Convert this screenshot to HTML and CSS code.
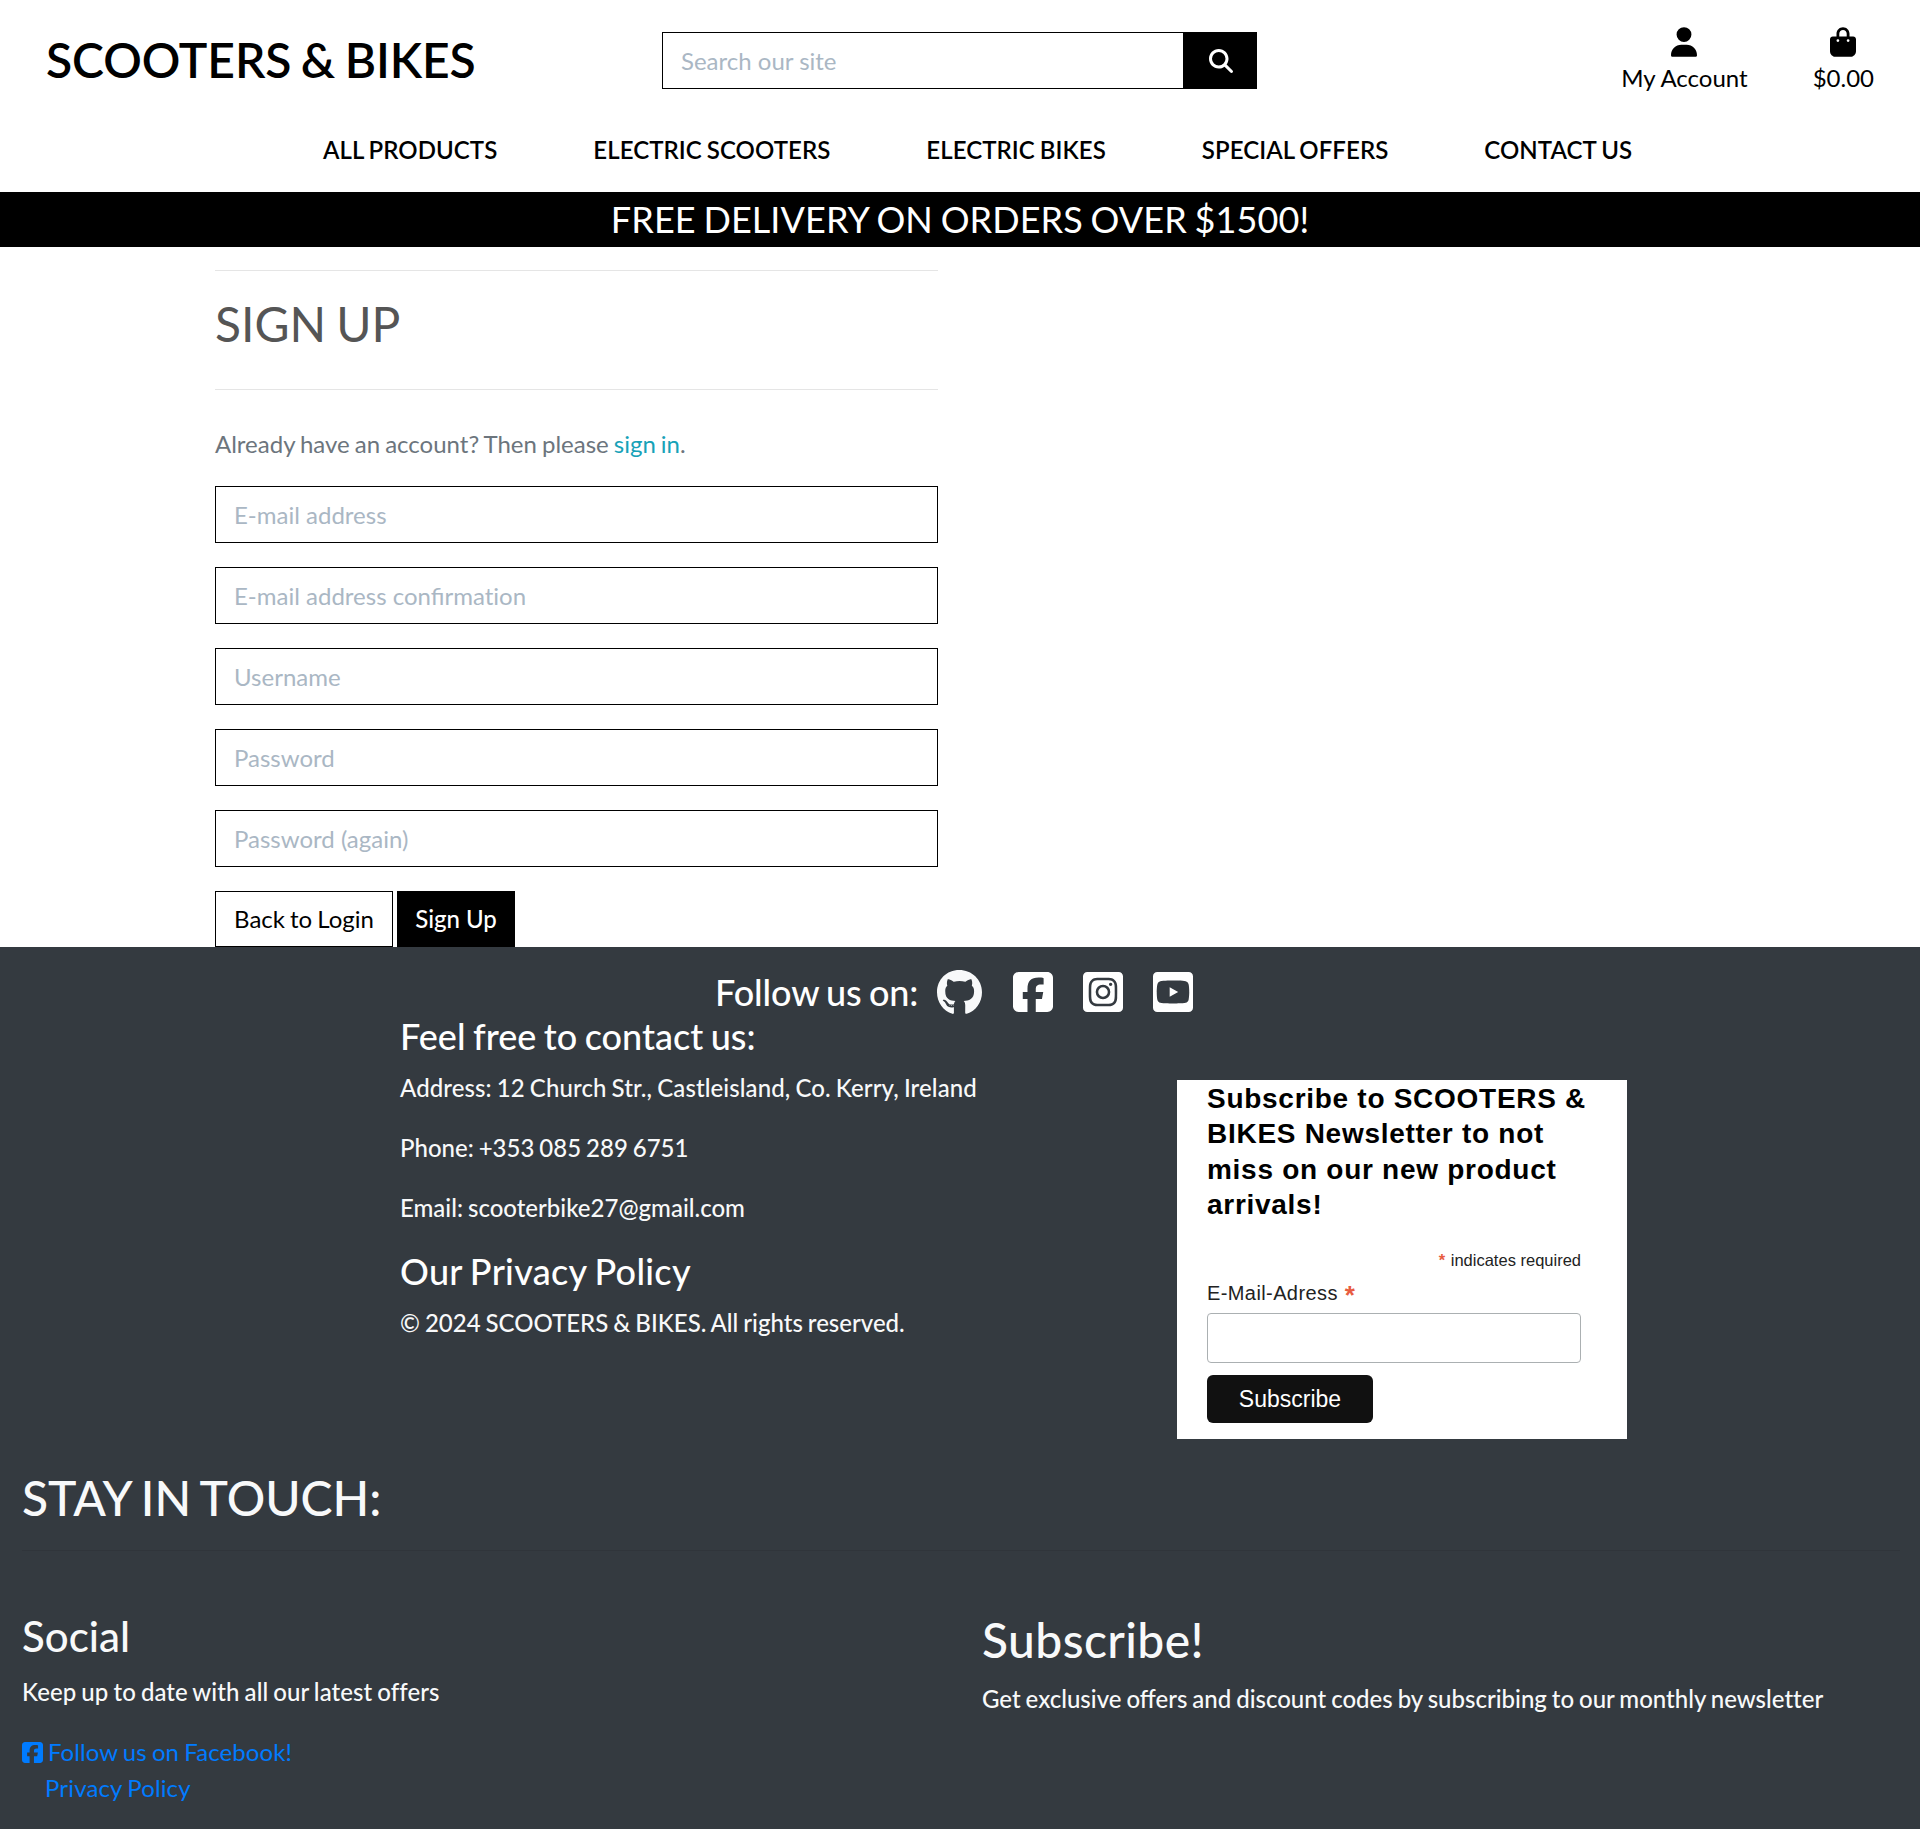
FILE: index.html
```html
<!DOCTYPE html>
<html lang="en">
<head>
<meta charset="utf-8">
<title>Scooters &amp; Bikes</title>
<link rel="stylesheet" href="styles.css">
</head>
<body>
<svg class="sprite" aria-hidden="true">
  <symbol id="facebook" viewBox="0 32 448 448"><path d="M64 32C28.7 32 0 60.7 0 96V416c0 35.3 28.7 64 64 64h98.2V334.2H109.4V256h52.8V222.3c0-87.1 39.4-127.5 125-127.5c16.2 0 44.2 3.2 55.7 6.4V172c-6-.6-16.5-1-29.6-1c-42 0-58.2 15.9-58.2 57.2V256h83.6l-14.4 78.2H255V480H384c35.3 0 64-28.7 64-64V96c0-35.3-28.7-64-64-64H64z"/></symbol>
</svg>
<header class="header">
  <div class="topbar">
    <a class="logo" href="#">SCOOTERS &amp; BIKES</a>
    <form class="search">
      <input class="search-input" type="text" placeholder="Search our site">
      <button class="search-button" type="button" aria-label="Search"><svg viewBox="0 0 512 512"><path d="M416 208c0 45.9-14.9 88.3-40 122.7L502.6 457.4c12.5 12.5 12.5 32.8 0 45.3s-32.8 12.5-45.3 0L330.7 376c-34.4 25.2-76.8 40-122.7 40C93.1 416 0 322.9 0 208S93.1 0 208 0S416 93.1 416 208zM208 352a144 144 0 1 0 0-288 144 144 0 1 0 0 288z"/></svg></button>
    </form>
    <div class="actions">
      <a class="action" href="#"><svg viewBox="0 0 448 512"><path d="M224 256A128 128 0 1 0 224 0a128 128 0 1 0 0 256zm-45.7 48C79.8 304 0 383.8 0 482.3C0 498.7 13.3 512 29.7 512H418.3c16.4 0 29.7-13.3 29.7-29.7C448 383.8 368.2 304 269.7 304H178.3z"/></svg><span>My Account</span></a>
      <a class="action" href="#"><svg viewBox="0 0 448 512"><path d="M160 112c0-35.3 28.7-64 64-64s64 28.7 64 64v48H160V112zm-48 48H48c-26.5 0-48 21.5-48 48V416c0 53 43 96 96 96H352c53 0 96-43 96-96V208c0-26.5-21.5-48-48-48H336V112C336 50.1 285.9 0 224 0S112 50.1 112 112v48zm24 48a24 24 0 1 1 0 48 24 24 0 1 1 0-48zm152 24a24 24 0 1 1 48 0 24 24 0 1 1 -48 0z"/></svg><span>$0.00</span></a>
    </div>
  </div>
  <nav class="nav">
    <a href="#">ALL PRODUCTS</a>
    <a href="#">ELECTRIC SCOOTERS</a>
    <a href="#">ELECTRIC BIKES</a>
    <a href="#">SPECIAL OFFERS</a>
    <a href="#">CONTACT US</a>
  </nav>
</header>
<div class="banner">FREE DELIVERY ON ORDERS OVER $1500!</div>
<main class="signup">
  <h1 class="signup-title">SIGN UP</h1>
  <p class="signup-note">Already have an account? Then please <a href="#">sign in</a>.</p>
  <form class="signup-form">
    <input class="field" type="text" placeholder="E-mail address">
    <input class="field" type="text" placeholder="E-mail address confirmat&zwnj;ion">
    <input class="field" type="text" placeholder="Username">
    <input class="field" type="text" placeholder="Password">
    <input class="field" type="text" placeholder="Password (again)">
    <div class="buttons">
      <a class="btn" href="#">Back to Login</a>
      <button class="btn btn-dark" type="button">Sign Up</button>
    </div>
  </form>
</main>
<footer class="footer">
  <div class="follow">
    <span class="follow-label">Follow us on:</span>
    <svg class="github" viewBox="0 8 496 496"><path d="M165.9 397.4c0 2-2.3 3.6-5.2 3.6-3.3.3-5.6-1.3-5.6-3.6 0-2 2.3-3.6 5.2-3.6 3-.3 5.6 1.3 5.6 3.6zm-31.1-4.5c-.7 2 1.3 4.3 4.3 4.9 2.6 1 5.6 0 6.2-2s-1.3-4.3-4.3-5.2c-2.6-.7-5.5.3-6.2 2.3zm44.2-1.7c-2.9.7-4.9 2.6-4.6 4.9.3 2 2.9 3.3 5.9 2.6 2.9-.7 4.9-2.6 4.6-4.6-.3-1.9-3-3.2-5.9-2.9zM244.8 8C106.1 8 0 113.3 0 252c0 110.9 69.8 205.8 169.5 239.2 12.8 2.3 17.3-5.6 17.3-12.1 0-6.2-.3-40.4-.3-61.4 0 0-70 15-84.7-29.8 0 0-11.4-29.1-27.8-36.6 0 0-22.9-15.7 1.6-15.4 0 0 24.9 2 38.6 25.8 21.9 38.6 58.6 27.5 72.9 20.9 2.3-16 8.8-27.1 16-33.7-55.9-6.2-112.3-14.3-112.3-110.5 0-27.5 7.6-41.3 23.6-58.9-2.6-6.5-11.1-33.3 2.6-67.9 20.9-6.5 69 27 69 27 20-5.6 41.5-8.5 62.8-8.5s42.8 2.9 62.8 8.5c0 0 48.1-33.6 69-27 13.7 34.7 5.2 61.4 2.6 67.9 16 17.7 25.8 31.5 25.8 58.9 0 96.5-58.9 104.2-114.8 110.5 9.2 7.9 17 22.9 17 46.4 0 33.7-.3 75.4-.3 83.6 0 6.5 4.6 14.4 17.3 12.1C428.2 457.8 496 362.9 496 252 496 113.3 383.5 8 244.8 8z"/></svg>
    <svg class="square"><use href="#facebook"/></svg>
    <svg class="square" viewBox="0 32 448 448"><path d="M224,202.66A53.34,53.34,0,1,0,277.36,256,53.38,53.38,0,0,0,224,202.66Zm124.71-41a54,54,0,0,0-30.41-30.41c-21-8.29-71-6.43-94.3-6.43s-73.25-1.93-94.31,6.43a54,54,0,0,0-30.41,30.41c-8.28,21-6.43,71.05-6.43,94.33S91,329.26,99.32,350.33a54,54,0,0,0,30.41,30.41c21,8.29,71,6.43,94.31,6.43s73.24,1.93,94.3-6.43a54,54,0,0,0,30.41-30.41c8.35-21,6.43-71.05,6.43-94.33S357.1,182.74,348.75,161.67ZM224,338a82,82,0,1,1,82-82A81.9,81.9,0,0,1,224,338Zm85.38-148.3a19.14,19.14,0,1,1,19.13-19.14A19.1,19.1,0,0,1,309.42,189.74ZM400,32H48A48,48,0,0,0,0,80V432a48,48,0,0,0,48,48H400a48,48,0,0,0,48-48V80A48,48,0,0,0,400,32ZM382.88,322c-1.29,25.63-7.14,48.34-25.85,67s-41.4,24.63-67,25.85c-26.41,1.49-105.59,1.49-132,0-25.63-1.29-48.26-7.15-67-25.85s-24.63-41.42-25.85-67c-1.49-26.42-1.49-105.61,0-132,1.29-25.63,7.07-48.34,25.85-67s41.47-24.56,67-25.78c26.41-1.49,105.59-1.49,132,0,25.63,1.29,48.33,7.15,67,25.85s24.63,41.42,25.85,67.05C384.37,216.44,384.37,295.56,382.88,322Z"/></svg>
    <svg class="square" viewBox="0 32 448 448"><path d="M186.8 202.1l95.2 54.1-95.2 54.1V202.1zM448 80v352c0 26.5-21.5 48-48 48H48c-26.5 0-48-21.5-48-48V80c0-26.5 21.5-48 48-48h352c26.5 0 48 21.5 48 48zm-42 176.3s0-59.6-7.6-88.2c-4.2-15.8-16.5-28.2-32.2-32.4C337.9 128 224 128 224 128s-113.9 0-142.2 7.7c-15.7 4.2-28 16.6-32.2 32.4-7.6 28.5-7.6 88.2-7.6 88.2s0 59.6 7.6 88.2c4.2 15.8 16.5 27.7 32.2 31.9C110.1 384 224 384 224 384s113.9 0 142.2-7.7c15.7-4.2 28-16.1 32.2-31.9 7.6-28.5 7.6-88.1 7.6-88.1z"/></svg>
  </div>
  <div class="contact-row">
    <section class="contact">
      <h4 class="contact-title">Feel free to contact us:</h4>
      <p class="address">Address: 12 Church Str., Castleisland, Co. Kerry, Ireland</p>
      <p>Phone: +353 085 289 6751</p>
      <p>Email: scooterbike27@gmail.com</p>
      <h4 class="policy-title">Our Privacy Policy</h4>
      <p>© 2024 SCOOTERS &amp; BIKES. All rights reserved.</p>
    </section>
    <form class="newsletter">
      <h2>Subscribe to SCOOTERS &amp; BIKES Newsletter to not miss on our new product arrivals!</h2>
      <div class="required"><span class="asterisk">*</span> indicates required</div>
      <label class="email-label" for="mail">E-Mail-Adress <span class="asterisk">*</span></label>
      <input class="email-input" id="mail" type="text">
      <button class="subscribe" type="button">Subscribe</button>
    </form>
  </div>
  <h1 class="touch">STAY IN TOUCH:</h1>
  <div class="columns">
    <section class="column">
      <h2 class="social-title">Social</h2>
      <p class="social-note">Keep up to date with all our latest offers</p>
      <a class="facebook-link" href="#"><svg><use href="#facebook"/></svg>Follow us on Facebook!</a>
      <a class="privacy-link" href="#">Privacy Policy</a>
    </section>
    <section class="column">
      <h1 class="subscribe-title">Subscribe!</h1>
      <p>Get exclusive offers and discount codes by subscribing to our monthly newslet&zwnj;ter</p>
    </section>
  </div>
</footer>
</body>
</html>
```
FILE: styles.css
```css
* { box-sizing: border-box; }
body {
  margin: 0;
  font: 400 24px/36px Lato, "Liberation Sans", sans-serif;
  word-spacing: -1.1px;
  color: #000;
  background: #fff;
}
h1, h2, h4, p { margin: 0; font-weight: 500; }
a { color: inherit; text-decoration: none; }
input, button { font: inherit; border-radius: 0; margin: 0; }
svg { fill: currentColor; flex: none; }
.sprite { display: none; }

.header { height: 192px; }
.topbar {
  display: grid;
  grid-template-columns: 616px 595px 1fr;
  height: 120px;
  padding: 0 46px;
}
.logo { font-size: 48px; line-height: 58px; font-weight: 600; letter-spacing: -.1px; word-spacing: -2.4px; padding-top: 31px; white-space: nowrap; }
.search { display: flex; height: 57px; margin-top: 32px; }
.search-input { width: 522px; border: 1px solid #000; padding: 0 18px; background: #fff; }
input::placeholder { color: #aab7c4; opacity: 1; }
.search-button {
  display: flex;
  align-items: center;
  justify-content: center;
  width: 73px;
  border: 0;
  background: #000;
  color: #fff;
}
.search-button svg { width: 24px; height: 24px; }
.actions { display: flex; justify-content: flex-end; gap: 65px; padding-top: 27px; word-spacing: 0; }
.action { display: flex; flex-direction: column; align-items: center; }
.action svg { width: 26px; height: 30px; margin-bottom: 3px; }
.nav { display: flex; justify-content: center; gap: 96px; padding: 12px 0 0 35px; font-weight: 600; letter-spacing: .06px; }
.banner { height: 55px; background: #000; color: #fff; font-size: 36px; line-height: 55px; text-align: center; letter-spacing: .1px; word-spacing: -1.6px; }

.signup { width: 723px; margin: 23px 0 0 215px; }
.signup-title {
  height: 120px;
  padding-top: 24px;
  border-top: 1px solid #e5e5e5;
  border-bottom: 1px solid #e5e5e5;
  color: #555;
  font-size: 48px;
  font-weight: 400;
  line-height: 58px;
  word-spacing: -2.2px;
}
.signup-note { margin-top: 36px; color: #6c757d; font-weight: 400; }
.signup-note a { color: #17a2b8; }
.signup-form { display: flex; flex-direction: column; gap: 24px; margin-top: 24px; }
.field { width: 723px; height: 57px; border: 1px solid #000; padding: 0 18px; }
.buttons { display: flex; gap: 4px; }
.btn { width: 178px; height: 56px; padding: 0; border: 1px solid #000; line-height: 54px; text-align: center; }
.btn-dark { width: 118px; background: #000; color: #fff; font-weight: 500; }

.footer { height: 882px; background: #343a40; color: #f8f9fa; }
.follow { display: flex; align-items: center; padding: 23px 0 0 715px; height: 67px; color: #fff; }
.follow-label { width: 222px; font-size: 36px; font-weight: 500; letter-spacing: -.1px; word-spacing: -1.7px; }
.github { width: 45px; height: 45px; margin-right: 31px; color: #f8f9fa; }
.square { width: 40px; height: 40px; margin-right: 30px; }
.contact-row { display: flex; padding-left: 400px; height: 455px; }
.contact { width: 777px; padding-top: 1px; }
.contact h4 { font-size: 36px; line-height: 43px; margin-bottom: 12px; color: #fff; word-spacing: -1.6px; }
.contact .policy-title { letter-spacing: .3px; }
.contact p { margin-bottom: 24px; font-weight: 500; }
.contact .address { letter-spacing: .09px; }
.newsletter {
  width: 450px;
  height: 359px;
  margin-top: 66px;
  padding: 1px 30px 0;
  background: #fff;
  color: #000;
  font-family: "Liberation Sans", Arial, sans-serif;
  word-spacing: 0;
}
.newsletter h2 { font-size: 28px; line-height: 35.25px; font-weight: 700; letter-spacing: .72px; }
.required { width: 374px; margin-top: 28px; text-align: right; font-size: 16.5px; line-height: 20px; color: #222; }
.asterisk { color: #e85c41; font-weight: 700; margin-right: 1px; }
.email-label { display: block; margin-top: 10px; font-size: 20px; line-height: 26px; color: #222; letter-spacing: .4px; }
.email-label .asterisk { margin-left: 1px; font-size: 26px; line-height: 20px; vertical-align: -4px; }
.email-input { display: block; width: 374px; height: 50px; margin-top: 7px; border: 1px solid #abb0b2; border-radius: 4px; }
.subscribe { width: 166px; height: 48px; margin-top: 12px; border: 0; border-radius: 6px; background: #111; color: #fff; font-size: 23px; }
.touch { margin: 0 20px 0 22px; height: 82px; font-size: 48px; line-height: 58px; word-spacing: -2.2px; border-bottom: 1px solid #30353b; }
.columns { display: grid; grid-template-columns: 1fr 1fr; padding-top: 60px; }
.column { display: flex; flex-direction: column; padding-left: 22px; }
.social-title { font-size: 42px; line-height: 50px; margin-bottom: 13px; }
.subscribe-title { font-size: 48px; line-height: 58px; margin-bottom: 12px; letter-spacing: .4px; }
.column p { margin-bottom: 24px; }
.social-note { letter-spacing: .07px; }
.facebook-link { display: flex; align-items: center; gap: 5px; color: #007bff; letter-spacing: .08px; }
.facebook-link svg { width: 21px; height: 21px; }
.privacy-link { padding-left: 23px; color: #007bff; letter-spacing: .15px; }
```
